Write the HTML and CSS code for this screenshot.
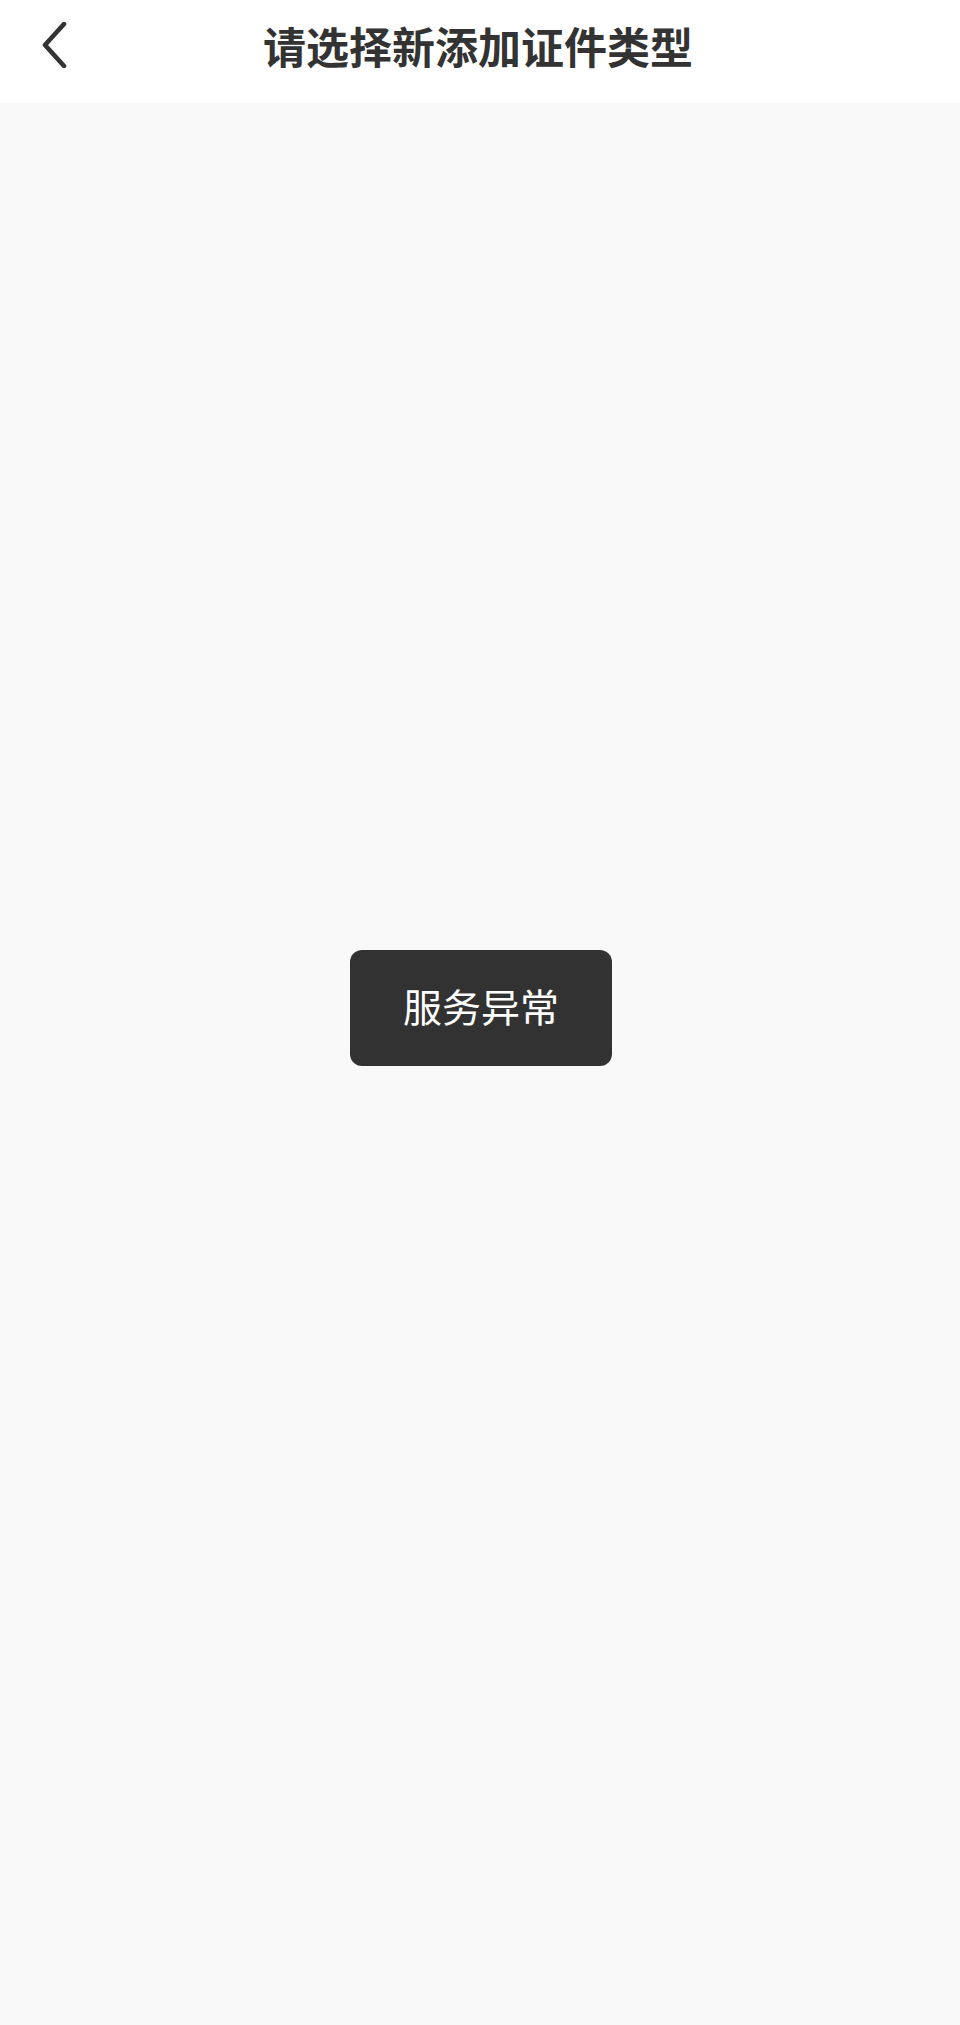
FILE: index.html
```html
<!DOCTYPE html>
<html lang="zh-CN">
<head>
<meta charset="utf-8">
<title>请选择新添加证件类型</title>
<link rel="stylesheet" href="styles.css">
</head>
<body>
<div class="page">
  <header class="navbar">
    <button class="back" aria-label="返回">
      <svg width="28" height="46" viewBox="0 0 28 46"><path d="M24 2 L5 23 L24 44" fill="none" stroke="#333" stroke-width="4.6" stroke-linecap="round" stroke-linejoin="round"/></svg>
    </button>
    <h1 class="title">请选择新添加证件类型</h1>
  </header>
  <main class="content"></main>
</div>
<div class="toast">服务异常</div>
</body>
</html>
```
FILE: styles.css
```css
html, body {
  margin: 0;
  padding: 0;
  height: 100%;
}
body {
  background: #f9f9f9;
  font-family: "Noto Sans CJK SC", "Noto Sans", sans-serif;
  color: #333;
}
.page {
  display: flex;
  flex-direction: column;
  min-height: 2025px;
}
.navbar {
  height: 103px;
  background: #ffffff;
  display: flex;
  align-items: center;
  justify-content: center;
  position: relative;
  flex: none;
}
.back {
  position: absolute;
  left: 40px;
  top: 22px;
  padding: 0;
  border: 0;
  background: none;
  width: 28px;
  height: 46px;
}
.back svg { display: block; }
.title {
  margin: 0;
  margin-top: -12px;
  margin-left: -4px;
  font-size: 43px;
  font-weight: 700;
  color: #333;
  letter-spacing: 0;
  line-height: 1;
}
.content {
  flex: 1;
  background: #f9f9f9;
}
.toast {
  position: fixed;
  left: 350px;
  top: 950px;
  width: 262px;
  height: 116px;
  box-sizing: border-box;
  padding-bottom: 6px;
  border-radius: 12px;
  background: #323232;
  color: #ffffff;
  font-size: 39px;
  display: flex;
  align-items: center;
  justify-content: center;
  line-height: 1;
}
```
